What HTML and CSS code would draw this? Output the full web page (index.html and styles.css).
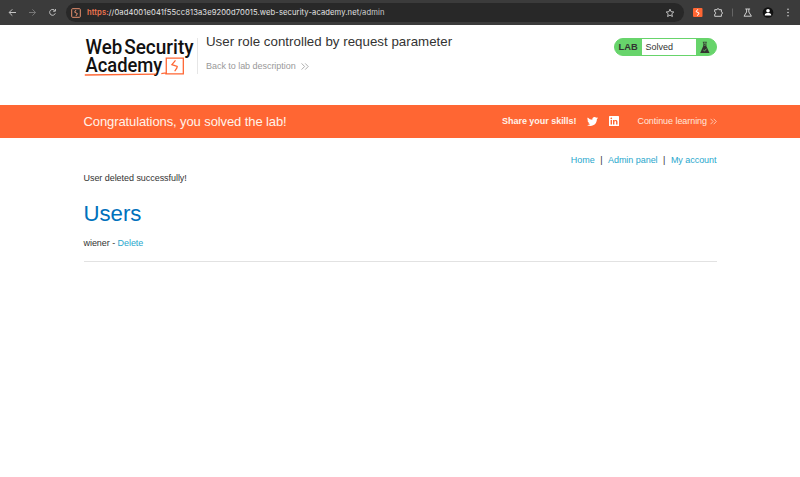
FILE: index.html
```html
<!DOCTYPE html>
<html lang="en">
<head>
<meta charset="utf-8">
<title>User role controlled by request parameter</title>
<link rel="stylesheet" href="styles.css">
</head>
<body>
<div class="toolbar">
  <svg class="nav" viewBox="0 0 64 25" width="64" height="25">
    <path d="M16 12.5H9.3M12.3 9.3L9.1 12.5l3.2 3.2" stroke="#c4c4c4"/>
    <path d="M29 12.5h6.5M32.4 9.4l3.2 3.1-3.2 3.1" stroke="#777"/>
    <path d="M55 10.8a2.9 2.9 0 1 0 .3 2.5M55.4 9v2.2h-2.3" stroke="#c4c4c4"/>
  </svg>
  <div class="address">
    <svg class="site" viewBox="0 0 10 10" width="10" height="10"><rect x=".7" y=".7" width="8.6" height="8.6" rx=".8"/><path d="M5 2L3.600 4.200l2.800 1.400L4.900 8"/></svg>
    <span class="url"><b>https:</b>//0ad4001e041f55cc813a3e9200d70015.web-security-academy.net<i>/admin</i></span>
    <svg class="star" viewBox="0 0 10 10" width="10" height="10"><path d="M5 1.2l1.1 2.5 2.7.3-2 1.8.6 2.7L5 7.1 2.6 8.5l.6-2.7-2-1.8 2.7-.3z"/></svg>
  </div>
  <svg class="tools" viewBox="0 0 116 25" width="116" height="25">
    <rect x="9" y="8" width="9.500" height="9" rx="1" fill="#ff6633"/>
    <path d="M13.800 9.300l-1.700 2.300 3 1.500-1.700 2.600" stroke="#fff" fill="none"/>
    <path d="M30.700 9.700h2.300c0-1.500 2-1.500 2 0h2.400v2.200c1.400 0 1.400 2.300 0 2.300v2.100h-6.700v-2.100c1.400 0 1.400-2.300 0-2.300z" stroke="#d0d0d0" fill="none"/>
    <path d="M48.500 8.500v8" stroke="#656565" fill="none"/>
    <path d="M61.300 9h4.800M62.600 9v3L60 16.200h7.400L64.800 12V9" stroke="#d0d0d0" fill="none"/>
    <circle cx="84" cy="12.5" r="5.3" fill="#111"/>
    <circle cx="84" cy="10.7" r="1.8" fill="#fff"/>
    <path d="M80.800 15.600v-.7c0-2.400 6.400-2.400 6.400 0v.7z" fill="#fff"/>
    <circle cx="104" cy="9.2" r=".8" fill="#d0d0d0"/><circle cx="104" cy="12.5" r=".8" fill="#d0d0d0"/><circle cx="104" cy="15.8" r=".8" fill="#d0d0d0"/>
  </svg>
</div>

<header class="container header">
  <svg class="logo" viewBox="0 0 114 52" width="114" height="52">
    <g class="logo-text">
      <text x="1.500" y="27.500" textLength="37" lengthAdjust="spacingAndGlyphs">Web</text>
      <text x="40.500" y="27.500" textLength="70" lengthAdjust="spacingAndGlyphs">Security</text>
      <text x="1.500" y="45.500" textLength="77.500" lengthAdjust="spacingAndGlyphs">Academy</text>
    </g>
    <path class="logo-line" d="M.8 48.200l72-.8M78 46.900l5-.9V31.200h17.200V47H82"/>
    <path class="logo-line" d="M92.300 33.500l-3.600 4.300 5.300 1.700-.3 1.600-2.200 3.300"/>
  </svg>
  <div class="heading">
    <h2>User role controlled by request parameter</h2>
    <a class="back"><span>Back to lab description</span><svg viewBox="0 0 8 7" width="8" height="7"><path d="M.6.4l3 3.1-3 3.1M4.200.4l3 3.100-3 3.100"/></svg></a>
  </div>
  <div class="status">
    <b>LAB</b><span>Solved</span>
    <svg viewBox="0 0 20 17" width="20" height="17"><path d="M6.800 3.200h4M7.600 3v4M10 3v4" stroke="#33332f" stroke-width=".7" fill="none"/><path d="M7.500 6.400h2.600L13.500 14H4.200z" fill="#33332f"/><path d="M7.300 11l1.200 1 2-2.300" stroke="#67d46b" stroke-width=".8" fill="none"/><circle cx="8.800" cy="5.200" r=".8" fill="#33332f"/></svg>
  </div>
</header>

<section class="banner">
  <div class="container banner-row">
    <h4>Congratulations, you solved the lab!</h4>
    <b class="share">Share your skills!</b>
    <svg class="twitter" viewBox="0 0 24 24" width="11" height="11"><path d="M24 4.600a10 10 0 0 1-2.800.8 5 5 0 0 0 2.100-2.700 10 10 0 0 1-3.100 1.200 4.900 4.900 0 0 0-8.400 4.500A14 14 0 0 1 1.700 3.200a4.900 4.900 0 0 0 1.500 6.600 5 5 0 0 1-2.200-.6 4.900 4.900 0 0 0 3.900 4.900 5 5 0 0 1-2.200.1 4.900 4.900 0 0 0 4.600 3.400A10 10 0 0 1 0 19.500a14 14 0 0 0 7.500 2.200c9.100 0 14.300-7.700 14-14.600A10 10 0 0 0 24 4.600z"/></svg>
    <svg class="linkedin" viewBox="0 0 10 10" width="10" height="10"><rect width="10" height="10" rx=".6" fill="#fff"/><path d="M1.600 4h1.400v4.500H1.600zM4 4h1.300v.6C6.200 3.400 8.500 3.700 8.500 5.900v2.600H7.100V6c0-1.300-1.700-1.200-1.700 0v2.500H4z"/><circle cx="2.300" cy="2.300" r=".85"/></svg>
    <a class="continue"><span>Continue learning</span><svg viewBox="0 0 8 7" width="7" height="7"><path d="M.6.4l3 3.100-3 3.100M4.200.4l3 3.100-3 3.100"/></svg></a>
  </div>
</section>

<main class="container">
  <nav class="links"><a>Home</a><i>|</i><a>Admin panel</a><i>|</i><a>My account</a></nav>
  <p class="message">User deleted successfully!</p>
  <h1>Users</h1>
  <p class="user">wiener - <a>Delete</a></p>
  <hr>
</main>
</body>
</html>
```
FILE: styles.css
```css
* { box-sizing: border-box; }
body { margin: 0; background: #fff; color: #333332; font: 9px/12px "Liberation Sans", Arial, sans-serif; }
h1, h2, h4, p { margin: 0; font-weight: 400; }
svg { display: block; flex: none; }
.container { width: 633px; margin: 0 auto 0 83.5px; }

.toolbar { display: flex; align-items: center; height: 25px; background: #3b3b3b; }
.nav { fill: none; stroke-width: 1; }
.address { display: flex; align-items: center; width: 618px; height: 19px; margin-left: 2px; padding: 0 9px 0 5px; border-radius: 10px; background: #282828; }
.site { fill: none; stroke: #e8906f; stroke-width: 1; }
.url { margin-left: 6px; font: 7.6px/12px Inter, sans-serif; color: #e4e4e4; white-space: nowrap; letter-spacing: .105px; }
.url b { color: #ee7550; font-weight: 600; }
.url i { font-style: normal; color: #cfcfcf; }
.star { margin-left: auto; fill: none; stroke: #d0d0d0; stroke-width: .9; }

.header { display: flex; height: 79.5px; }
.logo { margin-top: 2px; border-right: 1px solid #e6e6e6; border-image: linear-gradient(transparent 22%, #e6e6e6 22%, #e6e6e6 88%, transparent 88%) 1; overflow: visible; }
.logo-text { font: 500 20px/1 Roboto, sans-serif; fill: #111; }
.logo-line { fill: none; stroke: #ff6633; stroke-width: 1.3; }
.heading { margin-left: 8.5px; padding-top: 8px; }
.heading h2 { font-size: 13.3px; line-height: 17px; white-space: nowrap; letter-spacing: .02px; }
.back { display: flex; align-items: center; gap: 5px; margin-top: 10px; color: #999; letter-spacing: -.04px; }
.back svg { fill: none; stroke: #999; stroke-width: .8; }
.status { display: flex; align-items: center; width: 103px; height: 18px; margin: 13px 0 0 auto; border: 1px solid #67d46b; border-radius: 9px; overflow: hidden; background: #67d46b; }
.status b { width: 27px; padding-left: 4px; font-size: 9.3px; }
.status span { width: 54px; height: 16px; padding-left: 4px; line-height: 16px; background: #fff; }

.banner { height: 33px; background: #ff6633; color: #fff; }
.banner-row { display: flex; align-items: center; height: 33px; }
.banner h4 { width: 418.5px; padding-top: 1px; font-size: 13px; line-height: 16px; letter-spacing: -.1px; color: #fff3ea; white-space: nowrap; }
.share { width: 85px; color: #fff3ea; white-space: nowrap; letter-spacing: -.03px; }
.twitter { fill: #fff; }
.linkedin { margin-left: 10.5px; fill: #ff6633; }
.continue { display: flex; align-items: center; gap: 2.5px; margin-left: auto; color: #ffe7db; white-space: nowrap; letter-spacing: -.06px; }
.continue svg { fill: none; stroke: #ffe0d0; stroke-width: .9; }

main { padding-top: 16px; }
a { color: #29a7cd; }
.links { display: flex; justify-content: flex-end; gap: 5.5px; height: 12px; letter-spacing: -.04px; }
.links i { font-style: normal; width: 2.3px; }
.message { margin-top: 6px; letter-spacing: -.05px; }
h1 { margin-top: 15px; font-size: 22.2px; line-height: 30px; color: #0071bc; }
.user { margin-top: 8px; letter-spacing: -.05px; }
hr { height: 1px; margin: 12.5px 0 0; border: 0; background: #e2e2e2; }
```
